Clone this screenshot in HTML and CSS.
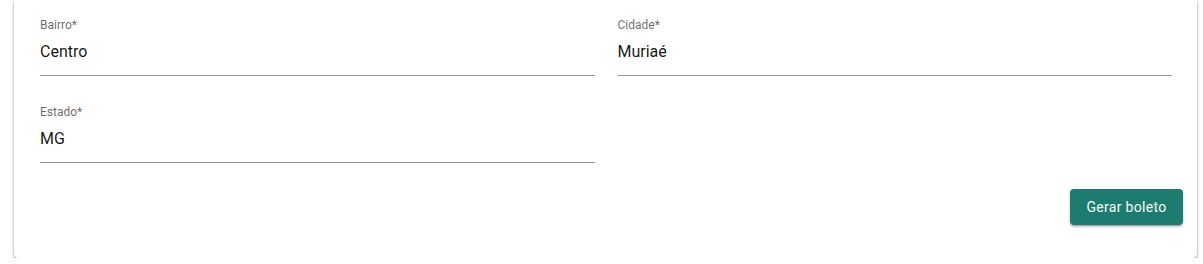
FILE: index.html
```html
<!DOCTYPE html>
<html lang="pt-BR">
<head>
<meta charset="utf-8">
<title>Endereço</title>
<link rel="stylesheet" href="styles.css">
</head>
<body>
<div class="card">
  <div class="fields">
    <div class="field">
      <label class="field-label">Bairro*</label>
      <div class="field-value">Centro</div>
    </div>
    <div class="field">
      <label class="field-label">Cidade*</label>
      <div class="field-value">Muriaé</div>
    </div>
    <div class="field">
      <label class="field-label">Estado*</label>
      <div class="field-value">MG</div>
    </div>
  </div>
  <div class="actions">
    <button class="btn-primary" type="button">Gerar boleto</button>
  </div>
</div>
</body>
</html>
```

FILE: styles.css
```css
html, body {
  margin: 0;
  padding: 0;
  background: #ffffff;
  font-family: Roboto, "Liberation Sans", Arial, sans-serif;
}

.card {
  margin: 0 6px 0 14px;
  width: 1183px;
  box-sizing: border-box;
  background: #ffffff;
  border-radius: 0 0 4px 4px;
  box-shadow: 0 1px 3px 0 rgba(0,0,0,.35), 0 2px 2px 0 rgba(0,0,0,.18), 0 3px 1px -1px rgba(0,0,0,.15);
  padding: 18px 14px 33px 14px;
}

.fields {
  display: grid;
  grid-template-columns: 1fr 1fr;
  column-gap: 23px;
  row-gap: 29px;
  padding: 0 11px 0 12px;
}

.field {
  display: flex;
  flex-direction: column;
  border-bottom: 1px solid rgba(0,0,0,.42);
  padding-bottom: 14px;
}

.field-label {
  font-size: 12px;
  line-height: 14px;
  color: rgba(0,0,0,.6);
}

.field-value {
  margin-top: 10px;
  font-size: 16px;
  line-height: 19px;
  color: rgba(0,0,0,.92);
}

.actions {
  display: flex;
  justify-content: flex-end;
  margin-top: 26px;
}

.btn-primary {
  height: 36px;
  padding: 0 16px;
  min-width: 113px;
  border: none;
  border-radius: 4px;
  background: #1e7b70;
  color: #f4fbf9;
  font-family: Roboto, "Liberation Sans", Arial, sans-serif;
  font-size: 14px;
  font-weight: 400;
  letter-spacing: .3px;
  box-shadow: 0 3px 1px -2px rgba(0,0,0,.2), 0 2px 2px 0 rgba(0,0,0,.14), 0 1px 5px 0 rgba(0,0,0,.12);
  cursor: pointer;
}
```
